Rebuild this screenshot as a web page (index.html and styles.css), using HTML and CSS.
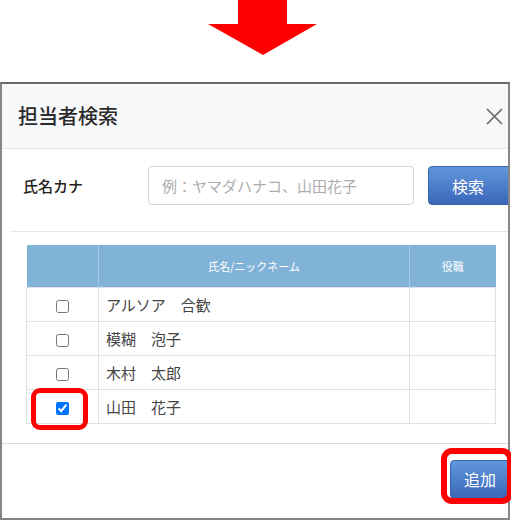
FILE: index.html
```html
<!DOCTYPE html>
<html lang="ja">
<head>
<meta charset="utf-8">
<title>担当者検索</title>
<link rel="stylesheet" href="styles.css">
</head>
<body>
<div class="page">
  <div class="arrow-area">
    <svg class="arrow" width="109" height="55" viewBox="0 0 109 55">
      <rect x="30" y="0" width="49" height="25" fill="#ff0000"/>
      <polygon points="0,24 109,24 55,55" fill="#ff0000"/>
    </svg>
  </div>
  <div class="dialog">
    <div class="dialog-header">
      <h1 class="dialog-title">担当者検索</h1>
      <svg class="close" width="17" height="17" viewBox="0 0 17 17">
        <path d="M1 1 L16 16 M16 1 L1 16" stroke="#6b6b6b" stroke-width="1.7" fill="none"/>
      </svg>
    </div>
    <div class="search-section">
      <div class="search-row">
        <label class="search-label">氏名カナ</label>
        <input class="search-input" type="text" placeholder="例：ヤマダハナコ、山田花子">
        <button class="btn btn-search">検索</button>
      </div>
    </div>
    <div class="table-area">
      <table class="result-table">
        <thead>
          <tr>
            <th class="col-check"></th>
            <th class="col-name">氏名/ニックネーム</th>
            <th class="col-role">役職</th>
          </tr>
        </thead>
        <tbody>
          <tr><td class="cell-check"><input type="checkbox"></td><td class="cell-name">アルソア　合歓</td><td></td></tr>
          <tr><td class="cell-check"><input type="checkbox"></td><td class="cell-name">模糊　泡子</td><td></td></tr>
          <tr><td class="cell-check"><input type="checkbox"></td><td class="cell-name">木村　太郎</td><td></td></tr>
          <tr><td class="cell-check"><input type="checkbox" checked></td><td class="cell-name">山田　花子</td><td></td></tr>
        </tbody>
      </table>
    </div>
    <div class="dialog-footer">
      <button class="btn btn-add">追加</button>
    </div>
  </div>
  <div class="mark mark-check"></div>
  <div class="mark mark-add"></div>
</div>
</body>
</html>
```

FILE: styles.css
```css
* { box-sizing: border-box; }
html, body { margin: 0; padding: 0; background: #ffffff; }
body {
  font-family: "Noto Sans CJK JP", "Noto Sans", sans-serif;
  color: #333333;
  overflow: hidden;
}
.page {
  position: relative;
  width: 511px;
  height: 520px;
}
.arrow-area {
  height: 82px;
}
.arrow {
  display: block;
  margin-left: 208px;
}
.dialog {
  width: 510px;
  height: 438px;
  border: 2px solid #858585;
  border-top-color: #6a6a6a;
  overflow: hidden;
  background: #ffffff;
}
.dialog-header {
  height: 65px;
  background: #f7f8fa;
  border-bottom: 1px solid #e4e8ec;
  display: flex;
  align-items: center;
  justify-content: space-between;
  padding: 0 5px 0 16px;
}
.dialog-title {
  margin: 0;
  font-size: 20px;
  font-weight: 500;
  color: #2b2b2b;
  line-height: 1;
}
.close { display: block; margin-top: 1px; }
.search-section {
  margin-left: 8px;
  border-bottom: 1px solid #e3e7eb;
}
.search-row {
  display: flex;
  align-items: center;
  padding: 17px 0 26px 13px;
}
.search-label {
  width: 125px;
  flex: none;
  font-size: 15px;
  color: #222222;
  font-weight: 500;
}
.search-input {
  flex: none;
  width: 266px;
  height: 39px;
  border: 1px solid #cfd4da;
  border-radius: 4px;
  padding: 0 13px;
  font-family: inherit;
  font-size: 15px;
  color: #333;
  outline: none;
}
.search-input::placeholder { color: #adadad; }
.btn {
  flex: none;
  font-family: inherit;
  color: #ffffff;
  font-size: 16px;
  border: 1px solid #3862ad;
  border-radius: 4px;
  background: linear-gradient(#6097da, #3b67ba);
  text-align: left;
  cursor: pointer;
}
.btn-search {
  margin-left: 14px;
  width: 100px;
  height: 39px;
  padding: 0 0 0 23px;
}
.table-area {
  padding: 13px 0 19px 24px;
}
.result-table {
  width: 469px;
  border-collapse: collapse;
  table-layout: fixed;
}
.result-table th {
  height: 42px;
  background: #80b3d7;
  color: #ffffff;
  font-size: 11px;
  font-weight: normal;
  border-left: 1px solid #a3cdea;
  padding: 0;
}
.result-table th:first-child { border-left: none; }
.col-check { width: 72px; }
.col-name { width: 311px; }
.col-role { width: 86px; }
.result-table td {
  height: 34px;
  border: 1px solid #dfe3e8;
  padding: 0;
  font-size: 15px;
  color: #444444;
}
.cell-check { text-align: center; }
.cell-check input {
  margin: 0;
  width: 13px;
  height: 13px;
  vertical-align: middle;
}
.cell-name { padding-left: 7px !important; }
.dialog-footer {
  border-top: 1px solid #dcdcdc;
  display: flex;
  justify-content: flex-end;
  padding-top: 16px;
}
.btn-add {
  width: 70px;
  height: 39px;
  margin-right: -12px;
  padding: 0 0 0 13px;
}
.mark {
  position: absolute;
  border: 5px solid #ff0000;
  border-radius: 9px;
}
.mark-check {
  left: 31px;
  top: 388px;
  width: 57px;
  height: 42px;
}
.mark-add {
  left: 441px;
  top: 448px;
  width: 72px;
  height: 56px;
  border-width: 6px;
  border-radius: 11px;
}
```
